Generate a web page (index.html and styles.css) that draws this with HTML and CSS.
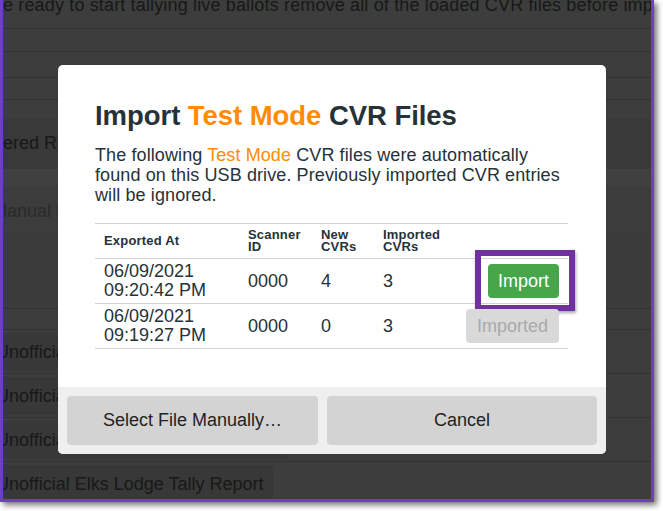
FILE: index.html
```html
<!DOCTYPE html>
<html lang="en">
<head>
<meta charset="utf-8">
<title>Import Test Mode CVR Files</title>
<link rel="stylesheet" href="styles.css">
</head>
<body>
<div class="frame">
  <div class="page">
    <p class="intro">e ready to start tallying live ballots remove all of the loaded CVR files before importing live CVR files.</p>
    <div class="band band-a"></div>
    <div class="band band-b"></div>
    <div class="band band-c"></div>
    <div class="gap-a"></div>
    <div class="bg-btn bg-btn-1"><span>ered Report</span></div>
    <div class="gap-b"></div>
    <div class="bg-btn bg-btn-2"><span>lanual Data</span></div>
    <div class="gap-c"></div>
    <div class="band band-d"></div>
    <div class="report-list">
      <div class="report-row"><span class="report-btn">Unofficial Full Election Tally Report</span></div>
      <div class="report-row"><span class="report-btn">Unofficial Precinct Tally Report</span></div>
      <div class="report-row"><span class="report-btn">Unofficial Masonic Hall Tally Report</span></div>
      <div class="report-row"><span class="report-btn">Unofficial Elks Lodge Tally Report</span></div>
    </div>
  </div>

  <div class="modal">
    <div class="modal-body">
      <h1 class="title">Import <span class="mode">Test Mode</span> CVR Files</h1>
      <p class="lead">The following <span class="mode">Test Mode</span> CVR files were automatically found on this USB drive. Previously imported CVR entries will be ignored.</p>
      <table class="cvr-table">
        <colgroup>
          <col class="c1"><col class="c2"><col class="c3"><col class="c4"><col class="c5">
        </colgroup>
        <thead>
          <tr>
            <th>Exported At</th>
            <th>Scanner<br>ID</th>
            <th>New<br>CVRs</th>
            <th>Imported<br>CVRs</th>
            <th></th>
          </tr>
        </thead>
        <tbody>
          <tr>
            <td>06/09/2021<br>09:20:42 PM</td>
            <td>0000</td>
            <td>4</td>
            <td>3</td>
            <td class="act"><button class="btn btn-import">Import</button></td>
          </tr>
          <tr>
            <td>06/09/2021<br>09:19:27 PM</td>
            <td>0000</td>
            <td>0</td>
            <td>3</td>
            <td class="act"><button class="btn btn-imported" disabled>Imported</button></td>
          </tr>
        </tbody>
      </table>
    </div>
    <div class="modal-footer">
      <button class="fbtn fbtn-select">Select File Manually…</button>
      <button class="fbtn fbtn-cancel">Cancel</button>
    </div>
  </div>
</div>
</body>
</html>
```

FILE: styles.css
```css
* { box-sizing: border-box; }

html, body {
  margin: 0;
  padding: 0;
  background: #ffffff;
}

body {
  font-family: "Liberation Sans", Arial, Helvetica, sans-serif;
  width: 663px;
  height: 511px;
  overflow: hidden;
}

.frame {
  position: relative;
  width: 654px;
  height: 502px;
  border: 3px solid #6a40c4;
  border-top: none;
  background: #3c3d3c;
  box-shadow: 3px 3px 6px rgba(0, 0, 0, 0.55);
  overflow: hidden;
}

/* dimmed page behind the modal */
.page {
  color: #171817;
  font-size: 18px;
}

.intro {
  margin: -5px 0 0 0;
  height: 34px;
  line-height: 20px;
  white-space: nowrap;
  overflow: hidden;
  font-size: 18px;
  letter-spacing: 0.15px;
  border-bottom: 1px solid #313231;
}

.band { border-bottom: 1px solid #313231; }
.band-a { height: 23px; }
.band-b { height: 26px; }
.band-c { height: 22px; }
.band-d { height: 22px; border-top: 1px solid #313231; }

.gap-a { height: 18px; }
.gap-b { height: 18px; background: #3f403f; }
.gap-c { height: 73px; background: #3a3b3a; }

.bg-btn {
  display: flex;
  align-items: center;
  white-space: nowrap;
  overflow: hidden;
}
.bg-btn-1 { height: 51px; background: #383938; }
.bg-btn-2 { height: 48px; background: #3b3c3b; color: #2a2b2a; }

.report-list {
  margin-left: -17px;
}
.report-row {
  height: 44px;
  padding-top: 3px;
  border-bottom: 1px solid #313231;
  white-space: nowrap;
}
.report-btn {
  display: inline-block;
  height: 38px;
  line-height: 38px;
  padding: 0 10px;
  background: #373837;
  border-radius: 4px;
}

/* modal */
.modal {
  position: absolute;
  left: 55px;
  top: 65px;
  width: 548px;
  background: #ffffff;
  border-radius: 5px;
  color: #263238;
}

.modal-body {
  padding: 35px 38px 38px 37px;
}

.title {
  margin: 0;
  font-size: 27.5px;
  line-height: 32px;
  font-weight: bold;
  letter-spacing: -0.05px;
  color: #263238;
}

.mode { color: #ff8c00; }

.lead {
  margin: 13px 0 18px 0;
  font-size: 18px;
  line-height: 20px;
  letter-spacing: 0.1px;
}

.cvr-table {
  width: 473px;
  table-layout: fixed;
  border-collapse: collapse;
}
.c1 { width: 144px; }
.c2 { width: 73px; }
.c3 { width: 62px; }
.c4 { width: 78px; }

.cvr-table th {
  text-align: left;
  font-size: 13px;
  line-height: 12px;
  font-weight: bold;
  letter-spacing: 0.2px;
  padding: 5px 0 5px 9px;
  height: 35px;
  vertical-align: middle;
  border-top: 1px solid #cfd3d6;
  border-bottom: 1px solid #cfd3d6;
}

.cvr-table td {
  font-size: 18px;
  line-height: 19px;
  padding: 3px 0 3px 9px;
  height: 45px;
  vertical-align: middle;
  border-bottom: 1px solid #cfd3d6;
}

.cvr-table td.act {
  text-align: right;
  padding-right: 9px;
}

.btn {
  position: relative;
  font-family: inherit;
  font-size: 18px;
  line-height: 20px;
  height: 34px;
  border: none;
  border-radius: 4px;
  padding: 0 8px;
}

.btn-import {
  background: #47a64a;
  color: #ffffff;
  width: 71px;
}

.btn-import::after {
  content: "";
  position: absolute;
  top: -14px;
  left: -13px;
  right: -16px;
  bottom: -13px;
  border: 6px solid #7030a0;
  box-shadow: 1px 2px 3px rgba(0, 0, 0, 0.35);
}

.btn-imported {
  background: #d9d9d9;
  color: #a9a9a9;
  width: 93px;
}

.modal-footer {
  display: flex;
  gap: 9px;
  padding: 9px;
  background: #efefef;
  border-radius: 0 0 5px 5px;
}

.fbtn {
  font-family: inherit;
  font-size: 18px;
  height: 49px;
  border: none;
  border-radius: 4px;
  background: #d3d3d3;
  color: #222222;
}
.fbtn-select { width: 251px; }
.fbtn-cancel { flex: 1; }
```
